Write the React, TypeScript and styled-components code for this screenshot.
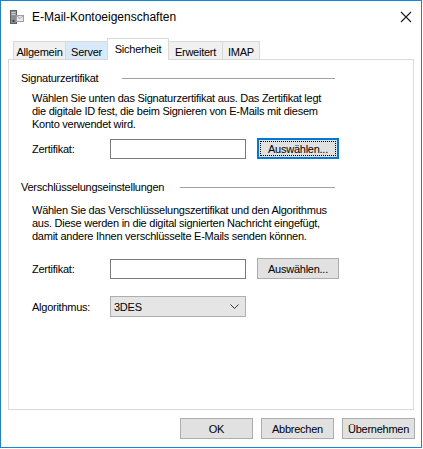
import React from "react";
import styled, { createGlobalStyle, css } from "styled-components";

const GlobalStyle = createGlobalStyle`
  html, body { margin: 0; padding: 0; background: #ffffff; }
  body { font-family: "Liberation Sans", Arial, sans-serif; font-size: 11px; letter-spacing: -0.25px; color: #000; }
  * { box-sizing: border-box; }
`;

const Window = styled.div`
  width: 422px;
  height: 448px;
  border: 1px solid #1883d7;
  background: #ffffff;
  display: flex;
  flex-direction: column;
`;

const TitleBar = styled.div`
  height: 29px;
  display: flex;
  align-items: center;
  padding-left: 9px;
  padding-right: 8px;
  padding-top: 2px;
`;

const Title = styled.span`
  font-family: "Liberation Sans", Arial, sans-serif;
  font-size: 12px;
  letter-spacing: 0;
  margin-left: 8px;
  flex: 1;
  color: #000;
`;

const CloseBox = styled.div`
  width: 12px;
  height: 12px;
  display: flex;
  margin-right: 1px;
`;

const Body = styled.div`
  flex: 1;
  display: flex;
  flex-direction: column;
  padding: 8px 6px 0 7px;
`;

const TabStrip = styled.div`
  display: flex;
  align-items: flex-end;
  height: 21px;
  padding-left: 5px;
  position: relative;
  z-index: 2;
`;

const Tab = styled.div<{ $w: number; $active?: boolean; $hover?: boolean }>`
  width: ${(p) => p.$w}px;
  height: 18px;
  margin-right: -1px;
  border: 1px solid #d9d9d9;
  border-bottom: none;
  background: ${(p) => (p.$hover ? "#d8eaf9" : "#f0f0f0")};
  display: flex;
  align-items: center;
  justify-content: center;
  padding-top: 2px;
  ${(p) =>
    p.$active &&
    css`
      height: 22px;
      margin-bottom: -1px;
      background: #ffffff;
      position: relative;
      z-index: 3;
      padding-top: 0;
      padding-bottom: 2px;
    `}
`;

const TabPanel = styled.div`
  width: 406px;
  height: 351px;
  border: 1px solid #d9d9d9;
  background: #ffffff;
  display: flex;
  flex-direction: column;
  padding: 11px 0 0 12px;
`;

const Heading = styled.div<{ $top: number }>`
  width: 314px;
  height: 13px;
  display: flex;
  align-items: center;
  line-height: 13px;
  margin-top: ${(p) => p.$top}px;
`;

const Rule = styled.div<{ $gap: number }>`
  flex: 1;
  height: 1px;
  margin-left: ${(p) => p.$gap}px;
  background: #a0a0a0;
`;

const Paragraph = styled.p<{ $top: number }>`
  margin: ${(p) => p.$top}px 0 0 11px;
  line-height: 13px;
  white-space: nowrap;
`;

const FieldRow = styled.div<{ $top: number }>`
  display: flex;
  align-items: center;
  height: 21px;
  margin: ${(p) => p.$top}px 0 0 11px;
`;

const FieldLabel = styled.span`
  width: 78px;
`;

const TextInput = styled.div`
  width: 136px;
  height: 20px;
  border: 1px solid #7a7a7a;
  background: #fff;
`;

const PushButton = styled.button<{ $focused?: boolean; $w?: number }>`
  width: ${(p) => p.$w ?? 82}px;
  height: 21px;
  margin: 0;
  padding: 0;
  font-family: "Liberation Sans", Arial, sans-serif;
  font-size: 11px;
  letter-spacing: -0.25px;
  color: #000;
  background: #e1e1e1;
  border: 1px solid #adadad;
  position: relative;
  display: flex;
  align-items: center;
  justify-content: center;
  ${(p) =>
    p.$focused &&
    css`
      border: 2px solid #0078d7;
      &::after {
        content: "";
        position: absolute;
        inset: 1px;
        border: 1px dotted #000;
      }
    `}
`;

const SideButton = styled(PushButton)`
  margin-left: 11px;
`;

const Select = styled.div`
  width: 136px;
  height: 21px;
  border: 1px solid #adadad;
  background: #e5e5e5;
  display: flex;
  align-items: center;
  padding: 0 6px 0 3px;
  justify-content: space-between;
`;

const ButtonBar = styled.div`
  display: flex;
  justify-content: flex-end;
  gap: 8px;
  margin-top: 8px;
`;

const AppIcon = () => (
  <svg width="14" height="14" viewBox="0 0 14 14">
    <rect x="0.5" y="0.5" width="6" height="13" fill="#8a8f94" stroke="#5d6166" />
    <rect x="1.5" y="2" width="4" height="1" fill="#d0d3d6" />
    <rect x="1.5" y="4" width="4" height="1" fill="#d0d3d6" />
    <rect x="2.5" y="10" width="2" height="2" fill="#3a3d40" />
    <rect x="6.5" y="5.5" width="7" height="6" fill="#e8eaec" stroke="#9aa0a6" />
    <path d="M6.5 5.5 L10 8.5 L13.5 5.5" fill="none" stroke="#9aa0a6" />
  </svg>
);

const CloseIcon = () => (
  <svg width="12" height="12" viewBox="0 0 12 12">
    <path d="M1 1 L11 11 M11 1 L1 11" stroke="#1a1a1a" strokeWidth="1.1" />
  </svg>
);

const Chevron = () => (
  <svg width="9" height="5" viewBox="0 0 9 5">
    <path d="M0.5 0.5 L4.5 4.5 L8.5 0.5" fill="none" stroke="#333" strokeWidth="1" />
  </svg>
);

const tabs = [
  { label: "Allgemein", w: 53 },
  { label: "Server", w: 43, hover: true },
  { label: "Sicherheit", w: 62, active: true },
  { label: "Erweitert", w: 55 },
  { label: "IMAP", w: 38 },
];

export default function App() {
  return (
    <>
      <GlobalStyle />
      <Window>
        <TitleBar>
          <AppIcon />
          <Title>E-Mail-Kontoeigenschaften</Title>
          <CloseBox>
            <CloseIcon />
          </CloseBox>
        </TitleBar>
        <Body>
          <TabStrip>
            {tabs.map((t) => (
              <Tab key={t.label} $w={t.w} $active={t.active} $hover={t.hover}>
                {t.label}
              </Tab>
            ))}
          </TabStrip>
          <TabPanel>
            <Heading $top={1}>
              <span>Signaturzertifikat</span>
              <Rule $gap={24} />
            </Heading>
            <Paragraph $top={7}>
              Wählen Sie unten das Signaturzertifikat aus. Das Zertifikat legt
              <br />
              die digitale ID fest, die beim Signieren von E-Mails mit diesem
              <br />
              Konto verwendet wird.
            </Paragraph>
            <FieldRow $top={7}>
              <FieldLabel>Zertifikat:</FieldLabel>
              <TextInput />
              <SideButton $focused>Auswählen...</SideButton>
            </FieldRow>
            <Heading $top={22}>
              <span>Verschlüsselungseinstellungen</span>
              <Rule $gap={16} />
            </Heading>
            <Paragraph $top={10}>
              Wählen Sie das Verschlüsselungszertifikat und den Algorithmus
              <br />
              aus. Diese werden in die digital signierten Nachricht eingefügt,
              <br />
              damit andere Ihnen verschlüsselte E-Mails senden können.
            </Paragraph>
            <FieldRow $top={15}>
              <FieldLabel>Zertifikat:</FieldLabel>
              <TextInput />
              <SideButton>Auswählen...</SideButton>
            </FieldRow>
            <FieldRow $top={17}>
              <FieldLabel>Algorithmus:</FieldLabel>
              <Select>
                <span>3DES</span>
                <Chevron />
              </Select>
            </FieldRow>
          </TabPanel>
          <ButtonBar>
            <PushButton $w={73}>OK</PushButton>
            <PushButton $w={73}>Abbrechen</PushButton>
            <PushButton $w={73}>Übernehmen</PushButton>
          </ButtonBar>
        </Body>
      </Window>
    </>
  );
}
